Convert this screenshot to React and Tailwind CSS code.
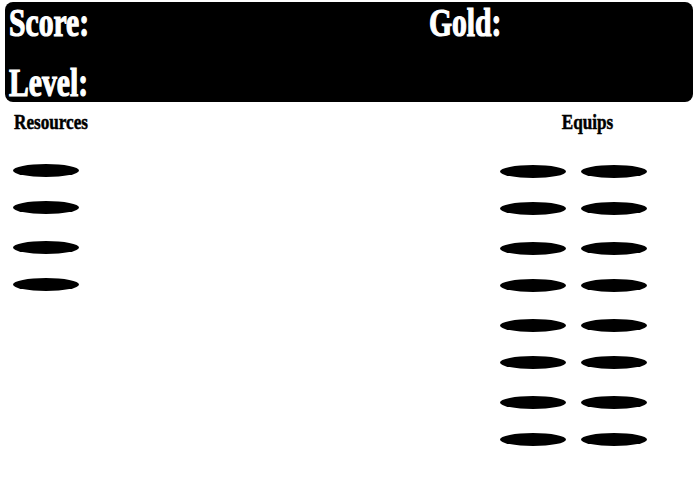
const Slot = () => <div className="w-[66px] h-[13px] rounded-[50%] bg-black" />;

const Heading = ({ children, className }) => (
  <div className={`h-[40px] font-['Liberation_Serif',serif] font-bold text-[39px] leading-[40px] text-white origin-left scale-x-[0.76] [-webkit-text-stroke:1.2px_white] whitespace-nowrap ${className}`}>
    {children}
  </div>
);

const SmallHeading = ({ children, className }) => (
  <div className={`h-[20px] font-['Liberation_Serif',serif] font-bold text-[22px] leading-[20px] text-black scale-x-[0.78] [-webkit-text-stroke:0.5px_black] whitespace-nowrap ${className}`}>
    {children}
  </div>
);

const App = () => {
  const resources = [0, 1];
  const equips = [0, 1, 2, 3];

  return (
    <div className="w-[699px] h-[500px] bg-white overflow-hidden pt-[2px]">
      {/* Top bar */}
      <div className="ml-[5px] w-[688px] h-[100px] bg-black rounded-[8px] flex pl-[4px] pt-px">
        <div className="w-[420px]">
          <Heading>Score:</Heading>
          <Heading className="mt-[20px]">Level:</Heading>
        </div>
        <div>
          <Heading>Gold:</Heading>
        </div>
      </div>

      {/* Panels */}
      <div className="flex">
        <div className="ml-[13px] w-[487px]">
          <SmallHeading className="mt-[10px] ml-px origin-left">Resources</SmallHeading>
          <div className="mt-[32px] flex flex-col gap-[27px]">
            {resources.map((i) => (
              <div key={i} className="flex flex-col gap-[24px]">
                <Slot />
                <Slot />
              </div>
            ))}
          </div>
        </div>
        <div className="w-[147px]">
          <SmallHeading className="mt-[10px] w-[175px] text-center">Equips</SmallHeading>
          <div className="mt-[33px] flex flex-col gap-[27px]">
            {equips.map((i) => (
              <div key={i} className="flex flex-col gap-[24px]">
                <div className="flex gap-[15px]"><Slot /><Slot /></div>
                <div className="flex gap-[15px]"><Slot /><Slot /></div>
              </div>
            ))}
          </div>
        </div>
      </div>
    </div>
  );
};

export default App;
